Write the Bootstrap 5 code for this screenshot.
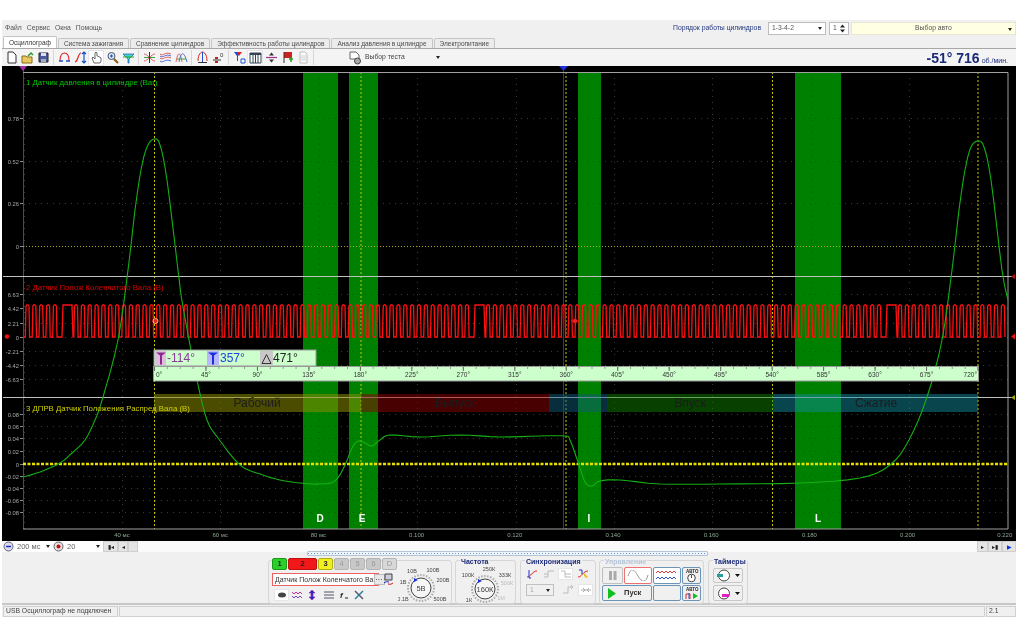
<!DOCTYPE html>
<html lang="ru"><head><meta charset="utf-8"><title>Осциллограф</title>
<link href="https://cdn.jsdelivr.net/npm/bootstrap@5.3.0/dist/css/bootstrap.min.css" rel="stylesheet">
<style>
html,body{margin:0;background:#fff;height:619px;overflow:hidden}
body{font-family:"Liberation Sans",Arial,sans-serif;font-size:6.8px;line-height:1;color:#444}
.op-app{width:1014px;margin:20px 0 0 2px;background:#f0f0f0;filter:blur(.3px)}
.op-menu{height:16px;padding:0 0 0 3px}
.op-menu .op-mi{margin-right:5px;color:#555}
.op-order{color:#23367e;margin-right:7px}
.op-sel{height:13px;border:1px solid #bdbdbd;background:#fff;display:flex;align-items:center;justify-content:space-between;padding:0 3px;color:#555}
.op-sel::after{content:"";border:2.5px solid transparent;border-top:3px solid #222;border-bottom:0;flex:none}
.op-spin{height:13px;width:20px;border:1px solid #bdbdbd;background:#fff;display:flex;align-items:center;justify-content:space-between;padding:0 3px;color:#555;margin-left:3px}
.op-yellow{background:#ffffe4;border-color:#e8e8d0;justify-content:center;position:relative}
.op-yellow::after{position:absolute;right:3px;top:5px}
.op-tabs{height:12px;border-bottom:0;padding-left:1px;gap:1px;align-items:flex-end}
.op-tabs .nav-link{font-size:6.5px;line-height:9px;height:10px;padding:0 5px;border:1px solid #c4c4c4;border-bottom:0;border-radius:2px 2px 0 0;background:#ececec;color:#4a4a4a;margin:0}
.op-tabs .nav-link.active{height:12px;padding:1px 5px 0;background:#fff;color:#333;border-color:#c4c4c4}
.op-toolbar{height:18px;background:#f4f4f4;border-top:1px solid #a8a8a8;padding-left:1px}
.op-tb{width:16px;height:16px;display:flex;align-items:center;justify-content:center;flex:none}
.op-tb svg{width:13px;height:13px;display:block}
.op-tb-on{background:#fff;box-shadow:inset 0 0 0 1px #e6e6e6}
.op-div{width:1px;height:15px;background:#d6d6d6;margin:0 2px;flex:none}
.op-test{width:92px;margin-left:32px;gap:3px;color:#444;font-size:6.8px}
.op-rpm{margin-left:auto;padding-right:8px;color:#1b2a78;font-weight:700;font-size:14px;white-space:nowrap}
.op-rpm span{font-weight:400;font-size:7px;margin-left:2px}
.op-scope{display:block;width:1014px;height:475px;background:#000}
.op-scope text{font-family:"Liberation Sans",Arial,sans-serif}
.op-strip{height:11px;background:#fafafa;padding-left:1px}
.op-strip .op-sel{border:0;background:#fff;height:11px;color:#666;font-size:7.5px}
.op-nav{width:11px;height:11px;background:#e4e4e4;border:1px solid #cfcfcf;display:flex;align-items:center;justify-content:center;color:#222;font-size:6px;flex:none}
.op-panel{height:53px;background:#f0f0f0;border-bottom:2px solid #c8c8c8;position:relative;padding:8px 0 0 266px;gap:3px}
.op-grab{position:absolute;left:305px;top:-1px;width:401px;height:5px;background-color:#eef5fc;background-image:linear-gradient(90deg,#6a94d0 1px,transparent 1px);background-size:3px 1px;background-position:3px 1px;background-repeat:repeat-x;border:1px solid #b4c4d4;border-radius:1px}
.op-grp{height:44px;border:1px solid #d6d6d6;border-radius:3px;position:relative;flex:none}
.op-grp-t{position:absolute;left:4px;top:-3px;background:#f0f0f0;padding:0 1px;font-weight:700;color:#1b2a78;font-size:7px}
.op-grp-t.op-off{color:#b4c4d8}
.op-ch{height:12px;border:1px solid #aaa;border-radius:2px;display:flex;align-items:center;justify-content:center;font-size:7.5px;font-weight:700;color:#222;flex:none;width:15px}
.op-ch-g{background:#c8c8c8;color:#999;border-color:#b4b4b4;font-weight:400;margin-left:1px}
.op-field{width:107px;height:13px;border:1px solid #f06060;background:#fff;color:#333;font-size:7px;white-space:nowrap;padding:0 1px 0 2px}
.op-field b{margin-left:auto;font-weight:400;background:#e8e8e8;border:1px solid #bbb;padding:1px;flex:none}
.op-ib{width:15px;height:12px;display:flex;align-items:center;justify-content:center;flex:none}
.op-ib svg{width:12px;height:12px;display:block}
.op-ctl{border:1px solid #6a94b8;border-radius:2px;background:#f0f0f0;display:flex;align-items:center;justify-content:center;flex:none;font-size:7.5px;font-weight:700;color:#333;height:17px}
.op-status{height:12px;background:#f0f0f0;gap:1px;padding:1px 0 0 1px}
.op-cell{border:1px solid #d0d0d0;height:11px;padding:1px 2px;color:#444;font-size:6.8px;white-space:nowrap}
</style></head><body>
<div class="op-app">

<div class="op-menu d-flex align-items-center">
  <span class="op-mi">Файл</span><span class="op-mi">Сервис</span><span class="op-mi">Окна</span><span class="op-mi">Помощь</span>
  <span class="op-order ms-auto">Порядок работы цилиндров</span>
  <div class="op-sel" style="width:58px">1-3-4-2</div>
  <div class="op-spin">1<svg width="5" height="9" viewBox="0 0 5 9"><path d="M0 3.500L2.500 .5 5 3.500zM0 5.500L2.500 8.500 5 5.500z" fill="#222"/></svg></div>
  <div class="op-sel op-yellow" style="width:165px;margin-left:2px">Выбор авто</div>
</div>

<ul class="nav nav-tabs op-tabs">
  <li class="nav-item"><a class="nav-link active" href="#">Осциллограф</a></li>
  <li class="nav-item"><a class="nav-link" href="#">Система зажигания</a></li>
  <li class="nav-item"><a class="nav-link" href="#">Сравнение цилиндров</a></li>
  <li class="nav-item"><a class="nav-link" href="#">Эффективность работы цилиндров</a></li>
  <li class="nav-item"><a class="nav-link" href="#">Анализ давления в цилиндре</a></li>
  <li class="nav-item"><a class="nav-link" href="#">Электропитание</a></li>
</ul>

<div class="op-toolbar d-flex align-items-center">
  <div class="op-tb"><svg viewBox="0 0 13 13"><path d="M3 1h5l3 3v8H3z" fill="#fff" stroke="#333"/></svg></div>
  <div class="op-tb"><svg viewBox="0 0 13 13"><path d="M1 5h4l1 1h5v6H1z" fill="#e8c860" stroke="#8a6a10"/><path d="M7 5l3-3 2 2" fill="none" stroke="#2a9a2a" stroke-width="1.500"/></svg></div>
  <div class="op-tb"><svg viewBox="0 0 13 13"><path d="M2 2h9v9H2z" fill="#4a5a9a" stroke="#223"/><path d="M4 2h5v3H4z" fill="#dde"/><path d="M4 8h5v3H4z" fill="#aab"/></svg></div>
  <div class="op-div"></div>
  <div class="op-tb"><svg viewBox="0 0 13 13"><path d="M2 10C2 3 5 2 6.500 2S11 3 11 10" fill="none" stroke="#e02020" stroke-width="1.200"/><path d="M1 10h4M8 10h4" stroke="#1a50d0" stroke-width="1.500"/></svg></div>
  <div class="op-tb"><svg viewBox="0 0 13 13"><path d="M1 11C4 11 4 2 7 2" fill="none" stroke="#e02020" stroke-width="1.200"/><path d="M10 1v11M8 3l2-2 2 2M8 10l2 2 2-2" fill="none" stroke="#1a50d0" stroke-width="1.200"/></svg></div>
  <div class="op-tb op-tb-on"><svg viewBox="0 0 13 13"><path d="M4 12L2 7l1-1 2 2V2l1-1 1 1v3l1 0 1 1 1 0 1 1v3l-1 2z" fill="#fff" stroke="#444" stroke-width=".8"/></svg></div>
  <div class="op-tb"><svg viewBox="0 0 13 13"><circle cx="5.500" cy="5" r="3.500" fill="#cfe8ff" stroke="#556"/><path d="M8 8l4 4" stroke="#8a5a10" stroke-width="2"/><path d="M4 5h3M5.500 3.500v3" stroke="#1a50d0"/></svg></div>
  <div class="op-tb"><svg viewBox="0 0 13 13"><path d="M1 3h11L7 8v4H6V8z" fill="#40d8b8" stroke="#1a50d0" stroke-width=".7"/><path d="M1 6h11" stroke="#28a028"/></svg></div>
  <div class="op-div"></div>
  <div class="op-tb"><svg viewBox="0 0 13 13"><path d="M1 3c4 0 7 7 11 7M1 10c4 0 7-7 11-7" fill="none" stroke="#e06060"/><path d="M1 6.500h11" stroke="#40a040"/><path d="M6.500 1v11" stroke="#333"/></svg></div>
  <div class="op-tb"><svg viewBox="0 0 13 13"><path d="M1 3c3 3 5-3 11 0M1 7c3 3 5-3 11 0" fill="none" stroke="#e06060"/><path d="M1 5c3 3 5-3 11 0M1 10c3 3 5-3 11 0" fill="none" stroke="#5070d0"/></svg></div>
  <div class="op-tb"><svg viewBox="0 0 13 13"><path d="M1 11C3 0 5 0 7 11" fill="none" stroke="#e06060"/><path d="M4 11C6 0 9 0 12 11" fill="none" stroke="#5070d0"/><path d="M2 8h9" stroke="#40a040"/></svg></div>
  <div class="op-div"></div>
  <div class="op-tb"><svg viewBox="0 0 13 13"><path d="M2 10C2 3 5 1 6.500 1S11 3 11 10" fill="none" stroke="#e02020"/><path d="M6.500 1v10" stroke="#1a50d0"/><path d="M2 11h9v1H2z" fill="#333"/></svg></div>
  <div class="op-tb"><svg viewBox="0 0 13 13"><path d="M1 9h8" stroke="#333"/><path d="M3 6h3v2H3zM3 10h3v2H3z" fill="#c02020"/><text x="8" y="6" font-size="6" fill="#333">0</text></svg></div>
  <div class="op-div"></div>
  <div class="op-tb"><svg viewBox="0 0 13 13"><path d="M1 1h7L5 5v5H4V5z" fill="#1a50d0"/><path d="M4 1h5L6 5z" fill="#e02020"/><path d="M8 8h4v4H8z" fill="#fff" stroke="#1a50d0"/></svg></div>
  <div class="op-tb op-tb-on"><svg viewBox="0 0 13 13"><path d="M1 2h11v10H1z" fill="#fff" stroke="#345"/><path d="M1 2h11v2H1z" fill="#345"/><path d="M4 4v8M6.500 4v8M9 4v8" stroke="#345"/></svg></div>
  <div class="op-tb"><svg viewBox="0 0 13 13"><path d="M1 6.500h11" stroke="#a03090" stroke-width="1.200"/><path d="M4 4.500l2.500-3 2.500 3z" fill="#333"/><path d="M4 8.500l2.500 3 2.500-3z" fill="#333"/></svg></div>
  <div class="op-tb"><svg viewBox="0 0 13 13"><path d="M3 1h8v6H3z" fill="#d02020"/><path d="M3 1v11" stroke="#333"/><path d="M8 8h4M10 6v5" stroke="#20a020" stroke-width="1.500"/></svg></div>
  <div class="op-tb"><svg viewBox="0 0 13 13"><path d="M3 1h5l2 2v9H3z" fill="#fff" stroke="#bbb"/><path d="M4 5h5M4 7h5M4 9h5" stroke="#ccc"/></svg></div>
  <div class="op-div"></div>
  <div class="op-test d-flex align-items-center"><svg width="14" height="14" viewBox="0 0 14 14"><path d="M2 1h6l3 3v4H2z" fill="#fff" stroke="#666"/><circle cx="9.500" cy="10" r="3" fill="#aaa" stroke="#444"/></svg><span>Выбор теста</span><span class="op-sel border-0 bg-transparent ms-auto p-0"></span></div>
  <div class="op-rpm">-51° 716<span>об./мин.</span></div>
</div>

<svg class="op-scope" id="scope" viewBox="2 66 1014 475" role="img" aria-label="Осциллограмма">
  <g fill="#008000"><rect x="303" y="72" width="35" height="457"/><rect x="349" y="72" width="29" height="457"/><rect x="578" y="72" width="23" height="457"/><rect x="795" y="72" width="46" height="457"/></g>
  <g id="grid"></g>
  <g stroke="#c8c800" stroke-width="1" stroke-dasharray="2 2"><path d="M154.500 72V529M361 72V529M566 72V529M772.500 72V529M978 72V529"/></g>
  <path d="M563.500 66V529" stroke="#2030c0"/>
  <path d="M23.500 66V529" stroke="#7a2a8a"/>
  <path d="M23 246.500H1008" stroke="#a8a820" stroke-dasharray="1 2"/>
  <path d="M23 72.500H1008V529H23" fill="none" stroke="#a0a0a0"/>
  <path d="M3 276.500H1015M3 397.500H1015" stroke="#c0c0c0"/>

  <g><rect x="154" y="394" width="207" height="18" fill="#8a8a00" fill-opacity=".55"/><rect x="361" y="394" width="188" height="18" fill="#900000" fill-opacity=".5"/><rect x="549" y="394" width="58" height="18" fill="#105a78" fill-opacity=".5"/><rect x="607" y="394" width="166" height="18" fill="#108000" fill-opacity=".5"/><rect x="773" y="394" width="205" height="18" fill="#108a9a" fill-opacity=".5"/></g>
  <g fill="#1c1c1c" font-size="12" text-anchor="middle"><text x="257" y="407">Рабочий</text><text x="455" y="407">Выпуск</text><text x="690" y="407">Впуск</text><text x="876" y="407">Сжатие</text></g>
  <path id="red" fill="none" stroke="#ff1010" stroke-width="1.300"/>
  <path d="M23 464H1008" stroke="#e8e000" stroke-width="2.500" stroke-dasharray="3 1.500"/>
  <path id="green" fill="none" stroke="#14b014" stroke-width="1.100"/>
  <g font-size="7.800"><text x="26" y="85" fill="#00c800">1 Датчик давления в цилиндре (Bar)</text><text x="26" y="290" fill="#d80000">2 Датчик Полож Коленчатого Вала (В)</text><text x="26" y="411" fill="#d0d000">3 ДПРВ Датчик Положения Распред Вала (В)</text></g>
  <g id="ylab" font-size="5.800" fill="#a8a8a8" text-anchor="end"></g>
  <g id="xlab" font-size="6" fill="#8aa890" text-anchor="middle"></g>
  <g font-size="10" font-weight="700" fill="#fff" text-anchor="middle"><text x="320" y="522">D</text><text x="362" y="522">E</text><text x="589" y="522">I</text><text x="818" y="522">L</text></g>

  <rect x="154" y="350" width="162" height="16" fill="#ccffcc" stroke="#999"/>
  <rect x="155" y="351" width="11" height="14" fill="#e0bce0"/><rect x="207" y="351" width="12" height="14" fill="#b8b8ff"/><rect x="260" y="351" width="13" height="14" fill="#c8c8c8"/>
  <path d="M156 352.500h10l-4 3v9h-2v-9z" fill="#8a2a8a"/><path d="M208 352.500h10l-4 3v9h-2v-9z" fill="#1a30e0"/><path d="M262 363.500l4.500-9 4.500 9z" fill="none" stroke="#333"/>
  <g font-size="12"><text x="167" y="362" fill="#8a3a9a">-114°</text><text x="220" y="362" fill="#2040e0">357°</text><text x="273" y="362" fill="#222">471°</text></g>
  <rect x="153.500" y="366.500" width="825" height="14.500" fill="#ccffcc" stroke="#999"/>
  <g id="ruler" font-size="6.500" fill="#333"></g>

  <path d="M19 66h8l-4 5z" fill="#a030a0"/><path d="M559 66h9l-4.500 5z" fill="#2030e0"/>
  <circle cx="7" cy="336.500" r="2.200" fill="#f01010"/><path d="M1011 336.500l4-3v6z" fill="#f01010"/><path d="M1011 276.500l4-2.500v5z" fill="#b01010"/><path d="M1011 397.500l4-2.500v5z" fill="#a0a000"/>
  <circle cx="155.500" cy="321" r="2.500" fill="#f02020" stroke="#f0c060"/><circle cx="575" cy="321" r="2.200" fill="#f02020"/><path d="M571 321h8" stroke="#f02020"/>
</svg>

<div class="op-strip d-flex align-items-center">
  <svg width="11" height="11" viewBox="0 0 11 11"><circle cx="5.500" cy="5.500" r="4.500" fill="#dde" stroke="#667"/><path d="M3 5.500h5" stroke="#1a30c0" stroke-width="1.500"/></svg>
  <div class="op-sel" style="width:39px">200 мс</div>
  <svg width="11" height="11" viewBox="0 0 11 11"><circle cx="5.500" cy="5.500" r="4.500" fill="#edd" stroke="#667"/><circle cx="5.500" cy="5.500" r="2" fill="#c01010"/></svg>
  <div class="op-sel" style="width:39px">20</div>
  <div class="op-nav" style="width:15px">▮◂</div><div class="op-nav" style="width:10px">◂</div><div class="op-nav" style="width:10px"></div>
  <div class="ms-auto op-nav">▸</div><div class="op-nav" style="width:14px">▸▮</div><div class="op-nav" style="color:#1030e0;width:14px">▶</div>
</div>

<div class="op-panel d-flex">
  <div class="op-grab"></div>
  <div class="op-grp d-flex" style="width:184px;padding:0 0 0 3px">
    <div class="d-flex flex-column flex-shrink-0" style="margin-top:-3px;width:126px">
      <div class="d-flex" style="margin-bottom:3px">
        <div class="op-ch" style="background:#28d028;border-color:#1a9a1a">1</div>
        <div class="op-ch" style="background:#f01818;width:29px;border-color:#c01010;margin-left:1px">2</div>
        <div class="op-ch" style="background:#f0f020;margin-left:1px;border-color:#b0b010">3</div>
        <div class="op-ch op-ch-g">4</div><div class="op-ch op-ch-g">5</div><div class="op-ch op-ch-g">6</div><div class="op-ch op-ch-g" style="background:#d8d8d8">D</div>
      </div>
      <div class="d-flex align-items-center" style="margin-bottom:3px">
        <div class="op-field d-flex align-items-center">Датчик Полож Коленчатого Ва<b>···</b></div>
        <svg class="ms-1" width="11" height="13" viewBox="0 0 11 13"><path d="M2 1h7v6H2z" fill="#ccd" stroke="#444"/><path d="M1 10a4 3 0 0 1 5-1" fill="none" stroke="#1a30c0"/><path d="M10 10a4 3 0 0 1-5 1" fill="none" stroke="#e01010"/></svg>
      </div>
      <div class="d-flex" style="padding-left:2px">
        <div class="op-ib op-tb-on"><svg viewBox="0 0 12 12"><ellipse cx="6" cy="6" rx="4" ry="2.500" fill="#444"/></svg></div>
        <div class="op-ib"><svg viewBox="0 0 12 12"><path d="M1 3l2 2 2-2 2 2 2-2 2 2" fill="none" stroke="#d03090"/><path d="M1 7l2 2 2-2 2 2 2-2 2 2" fill="none" stroke="#8040c0"/></svg></div>
        <div class="op-ib"><svg viewBox="0 0 12 12"><path d="M6 1L3 4h2v4H3l3 3 3-3H7V4h2z" fill="#2030d0" stroke="#a020a0" stroke-width=".6"/></svg></div>
        <div class="op-ib" style="margin-left:2px"><svg viewBox="0 0 12 12"><path d="M1 3h10M1 6h10M1 9h10" stroke="#556"/></svg></div>
        <div class="op-ib"><svg viewBox="0 0 12 12"><text x="2" y="9" font-size="8" font-weight="700" font-style="italic" fill="#222">f</text><path d="M7 9h3" stroke="#222"/></svg></div>
        <div class="op-ib"><svg viewBox="0 0 12 12"><path d="M2 2l8 8" stroke="#556" stroke-width="1.500"/><path d="M10 2L2 10" stroke="#2a7aa0" stroke-width="1.500"/></svg></div>
      </div>
    </div>
    <svg class="flex-shrink-0" width="54" height="48" viewBox="398 556 54 48" font-size="5.500" fill="#444" text-anchor="middle" style="margin-top:-5px">
      <circle cx="421" cy="588" r="10" fill="#f6f6f6" stroke="#444"/><circle cx="421" cy="588" r="13" fill="none" stroke="#aaa" stroke-width="2" stroke-dasharray="1.500 1.500"/>
      <path d="M414 578l4 2-4 2z" fill="#1a30e0"/>
      <text x="421" y="591" font-size="7.500">5В</text>
      <text x="412" y="573">10В</text><text x="433" y="572">100В</text><text x="443" y="582">200В</text><text x="403" y="584">1В</text><text x="403" y="601">0.1В</text><text x="440" y="601">500В</text>
    </svg>
  </div>
  <div class="op-grp" style="width:61px">
    <div class="op-grp-t">Частота</div>
    <svg class="d-block" width="61" height="44" viewBox="455 560 61 44" font-size="5.500" fill="#444" text-anchor="middle">
      <circle cx="484" cy="588" r="10" fill="#f6f6f6" stroke="#444"/><circle cx="484" cy="588" r="13" fill="none" stroke="#aaa" stroke-width="2" stroke-dasharray="1.500 1.500"/>
      <path d="M477 578l4 2-4 2z" fill="#1a30e0"/>
      <text x="484" y="591" font-size="7.500">160К</text>
      <text x="467" y="576">100К</text><text x="488" y="570">250К</text><text x="504" y="576">333К</text><text x="506" y="584" fill="#bbb">500К</text><text x="468" y="601">1К</text><text x="500" y="599" fill="#bbb">1М</text>
    </svg>
  </div>
  <div class="op-grp" style="width:76px;margin-left:1px">
    <div class="op-grp-t">Синхронизация</div>
    <div class="d-flex" style="padding:7px 0 0 3px;gap:2px">
      <div class="op-ib"><svg viewBox="0 0 12 12"><path d="M1 9c4 0 5-6 10-6" fill="none" stroke="#e02020"/><path d="M3 2v8h2" fill="none" stroke="#1a30d0"/></svg></div>
      <div class="op-ib"><svg viewBox="0 0 12 12"><path d="M1 9h4V3h6M5 6H1" fill="none" stroke="#bbb"/></svg></div>
      <div class="op-ib op-tb-on"><svg viewBox="0 0 12 12"><path d="M1 3h4v6h6M5 6h6" fill="none" stroke="#bbb"/></svg></div>
      <div class="op-ib"><svg viewBox="0 0 12 12"><path d="M1 9c4 0 5-6 10-6" fill="none" stroke="#e02020"/><path d="M2 2h3v4" fill="none" stroke="#1a30d0"/><path d="M7 5l4 4-2 1-2-2z" fill="#f0c020"/></svg></div>
    </div>
    <div class="d-flex align-items-center" style="padding:4px 0 0 5px;gap:3px">
      <div class="op-sel" style="width:28px;height:12px;color:#aaa;border-color:#c0c0c0;background:#f0f0f0">1</div>
      <div class="op-ib" style="margin-left:3px"><svg viewBox="0 0 12 12"><path d="M1 9h5V3h5M9 1l2 2-2 2" fill="none" stroke="#bbb"/></svg></div>
      <div class="op-ib op-tb-on"><svg viewBox="0 0 12 12"><path d="M1 6h10M3 4l2 2-2 2M9 4L7 6l2 2" fill="none" stroke="#aaa"/></svg></div>
    </div>
  </div>
  <div class="op-grp" style="width:105px">
    <div class="op-grp-t op-off">Управление</div>
    <div class="d-flex" style="padding:6px 0 0 2px;gap:1px">
      <div class="d-flex flex-column" style="gap:1px;width:50px">
        <div class="d-flex" style="gap:1px">
          <div class="op-ctl" style="width:21px;border-color:#c0c0c0"><svg width="9" height="11" viewBox="0 0 9 11"><path d="M1 1h3v9H1zM5.500 1h3v9h-3z" fill="#aaa"/></svg></div>
          <div class="op-ctl" style="width:28px;border-color:#f07070;background:#fff"><svg width="22" height="11" viewBox="0 0 22 11"><path d="M1 6C4-3 7-1 11 6s8 7 10-1" fill="none" stroke="#999"/></svg></div>
        </div>
        <div class="op-ctl" style="width:50px;height:16px;gap:8px;justify-content:flex-start;padding-left:5px"><svg width="8" height="11" viewBox="0 0 8 11"><path d="M0 0l8 5.500L0 11z" fill="#10c020"/></svg>Пуск</div>
      </div>
      <div class="d-flex flex-column" style="gap:1px;width:28px">
        <div class="op-ctl" style="width:28px;background:#fff"><svg width="24" height="13" viewBox="0 0 24 13"><path d="M1 4l2-2 2 2 2-2 2 2 2-2 2 2 2-2 2 2 2-2 2 2" fill="none" stroke="#e04040"/><path d="M1 10l2-2 2 2 2-2 2 2 2-2 2 2 2-2 2 2 2-2 2 2" fill="none" stroke="#3050e0"/></svg></div>
        <div class="op-ctl" style="width:28px;height:16px"></div>
      </div>
      <div class="d-flex flex-column" style="gap:1px">
        <div class="op-ctl" style="width:19px"><svg width="15" height="15" viewBox="0 0 15 15"><text x="2" y="5" font-size="4.500" font-weight="700" fill="#222">АВТО</text><circle cx="7.500" cy="10" r="3.800" fill="#fff" stroke="#444"/><path d="M7.500 10V7" stroke="#1a50d0"/></svg></div>
        <div class="op-ctl" style="width:19px;height:16px"><svg width="15" height="15" viewBox="0 0 15 15"><text x="2" y="5" font-size="4.500" font-weight="700" fill="#222">АВТО</text><path d="M2 13V8h4v5" fill="none" stroke="#e02020"/><path d="M5 7v6" stroke="#1a50d0"/><path d="M9 7l5 3-5 3z" fill="#10c020"/></svg></div>
      </div>
    </div>
  </div>
  <div class="op-grp" style="width:40px;margin-left:1px">
    <div class="op-grp-t">Таймеры</div>
    <div class="d-flex flex-column" style="padding:7px 0 0 4px;gap:2px">
      <div class="op-ctl justify-content-start" style="width:30px;height:15px;border-color:#c8c8c8"><svg width="28" height="13" viewBox="0 0 28 13"><circle cx="10" cy="6.500" r="5.500" fill="#fff" stroke="#444"/><path d="M3 5h6v3H3z" fill="#20a0a0"/><path d="M21 5h5l-2.500 3z" fill="#111"/></svg></div>
      <div class="op-ctl justify-content-start" style="width:30px;height:16px;border-color:#c8c8c8"><svg width="28" height="13" viewBox="0 0 28 13"><circle cx="10" cy="6.500" r="5.500" fill="#fff" stroke="#444"/><path d="M8 7h7v3H8z" fill="#e020c0"/><path d="M21 5h5l-2.500 3z" fill="#111"/></svg></div>
    </div>
  </div>
</div>

<div class="op-status d-flex">
  <div class="op-cell" style="width:115px">USB Осциллограф не подключен</div>
  <div class="op-cell flex-grow-1"></div>
  <div class="op-cell" style="width:30px">2.1</div>
</div>
</div>

<script>
(function(){
  var NS='http://www.w3.org/2000/svg';
  function add(parent,tag,attrs,text){var e=document.createElementNS(NS,tag);for(var k in attrs)e.setAttribute(k,attrs[k]);if(text!=null)e.textContent=text;document.getElementById(parent).appendChild(e);}
  var ys=[[118,'0.78'],[161,'0.52'],[203,'0.26'],[246,'0'],[293.7,'6.63'],[308,'4.42'],[322.5,'2.21'],[336.5,'0'],[351,'-2.21'],[365,'-4.42'],[379,'-6.63'],[413.5,'0.08'],[426,'0.06'],[438,'0.04'],[451,'0.02'],[464,'0'],[476,'-0.02'],[488,'-0.04'],[500,'-0.06'],[512,'-0.08']];
  ys.forEach(function(r){
    var y=Math.round(r[0])+.5;
    add('grid','path',{d:'M23 '+y+'H1008',stroke:'#3a3a3a','stroke-dasharray':'1 5'});
    add('grid','path',{d:'M20 '+y+'H23',stroke:'#8a8a8a'});
    add('ylab','text',{x:19,y:y+2},r[1]);
  });
  for(var i=0;i<10;i++){var x=Math.round(23.5+98.4*i)+.5;add('grid','path',{d:'M'+x+' 72V529',stroke:'#3a3a3a','stroke-dasharray':'1 5'});}
  ['40 мс','60 мс','80 мс','0.100','0.120','0.140','0.160','0.180','0.200','0.220'].forEach(function(t,i){add('xlab','text',{x:122+98.2*i-(i==9?1:0),y:537},t);});
  for(var m=0;m<=720;m+=11.25){var sx=154.5+m/720*823.5;add('ruler','path',{d:'M'+sx+' 367V369',stroke:'#999'});}
  for(var d=0;d<=720;d+=45){
    var rx=154.5+d/720*823.5;
    add('ruler','path',{d:'M'+rx+' 367V371',stroke:'#666'});
    if(d===0)add('ruler','text',{x:156,y:377},d+'°');
    else if(d===720)add('ruler','text',{x:977,y:377,'text-anchor':'end'},d+'°');
    else add('ruler','text',{x:rx,y:377,'text-anchor':'middle'},d+'°');
  }
  var LOW=337,HIGH=305;
  var p='M24 '+LOW,xp=25,period=6.86;
  var gaps=[62,474,886];
  while(xp<1006){
    var g=gaps.find(function(v){return xp<v&&xp+period>v;});
    if(g){p+='H'+g+'L'+(g+1)+' '+HIGH+'H'+(g+10)+'L'+(g+11)+' '+LOW;xp=g+11.5;continue;}
    p+='H'+(xp+.3).toFixed(1)+'L'+(xp+1).toFixed(1)+' '+(HIGH+1)+'Q'+(xp+2.5).toFixed(1)+' '+(HIGH-1.5)+' '+(xp+4).toFixed(1)+' '+(HIGH+1)+'L'+(xp+4.6).toFixed(1)+' '+LOW;
    xp+=period;
  }
  document.getElementById('red').setAttribute('d',p);
  var pts=[[23,477],[40,472],[60,463],[72,453],[85,440],[95,420],[103,397],[118,340],[128,270],[135,210],[141,170],[147,147],[154,139],[160,145],[167,180],[178,270],[183,307],[197,380],[207,420],[218,438],[240,465],[260,474],[280,480],[300,483],[320,484],[335,481],[345,465],[352,448],[358,441],[365,443],[372,446],[380,440],[390,435],[420,437],[460,435],[500,437],[540,436],[565,436],[570,440],[578,462],[585,482],[592,486],[600,481],[620,480],[660,484],[720,484],[800,483],[860,478],[890,465],[909,440],[927,397],[942,340],[952,270],[959,210],[965,170],[971,147],[978,141],[984,147],[991,180],[1002,270],[1008,300]];
  var dd='M'+pts[0][0]+' '+pts[0][1];
  for(var j=0;j<pts.length-1;j++){
    var a=pts[Math.max(j-1,0)],b=pts[j],c=pts[j+1],e=pts[Math.min(j+2,pts.length-1)];
    for(var s=1;s<=4;s++){var t=s/4,t2=t*t,t3=t2*t;
      var qx=.5*(2*b[0]+(c[0]-a[0])*t+(2*a[0]-5*b[0]+4*c[0]-e[0])*t2+(3*b[0]-a[0]-3*c[0]+e[0])*t3);
      var qy=.5*(2*b[1]+(c[1]-a[1])*t+(2*a[1]-5*b[1]+4*c[1]-e[1])*t2+(3*b[1]-a[1]-3*c[1]+e[1])*t3);
      dd+='L'+qx.toFixed(1)+' '+qy.toFixed(1);}
  }
  document.getElementById('green').setAttribute('d',dd);
})();
</script>
</body></html>
